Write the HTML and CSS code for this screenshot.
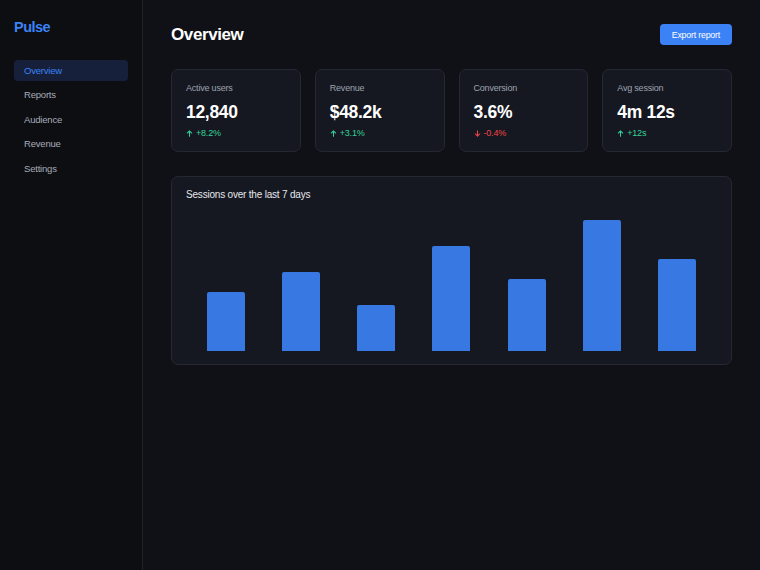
FILE: index.html
```html
<!DOCTYPE html>
<html>
<head>
    <title>Pulse - Overview</title>
    <meta name="viewport" content="width=device-width, initial-scale=1.0">
    <link rel="stylesheet" href="styles.css">
</head>
<body>
    <aside class="sidebar">
        <div class="logo">Pulse</div>
        <nav class="nav">
            <a class="nav-item active" href="#">Overview</a>
            <a class="nav-item" href="#">Reports</a>
            <a class="nav-item" href="#">Audience</a>
            <a class="nav-item" href="#">Revenue</a>
            <a class="nav-item" href="#">Settings</a>
        </nav>
    </aside>

    <main class="main">
        <div class="header">
            <h1>Overview</h1>
            <button type="button" class="btn-primary">Export report</button>
        </div>

        <div class="stats">
            <div class="card stat">
                <div class="stat-label">Active users</div>
                <div class="stat-value">12,840</div>
                <div class="stat-change up">
                    <svg viewBox="0 0 8 8"><path d="M4 7V1M1.5 3.5L4 1l2.5 2.5"/></svg>
                    +8.2%
                </div>
            </div>
            <div class="card stat">
                <div class="stat-label">Revenue</div>
                <div class="stat-value">$48.2k</div>
                <div class="stat-change up">
                    <svg viewBox="0 0 8 8"><path d="M4 7V1M1.5 3.5L4 1l2.5 2.5"/></svg>
                    +3.1%
                </div>
            </div>
            <div class="card stat">
                <div class="stat-label">Conversion</div>
                <div class="stat-value">3.6%</div>
                <div class="stat-change down">
                    <svg viewBox="0 0 8 8"><path d="M4 1v6M1.5 4.5L4 7l2.5-2.5"/></svg>
                    -0.4%
                </div>
            </div>
            <div class="card stat">
                <div class="stat-label">Avg session</div>
                <div class="stat-value">4m 12s</div>
                <div class="stat-change up">
                    <svg viewBox="0 0 8 8"><path d="M4 7V1M1.5 3.5L4 1l2.5 2.5"/></svg>
                    +12s
                </div>
            </div>
        </div>

        <div class="card chart-card">
            <div class="chart-title">Sessions over the last 7 days</div>
            <div class="chart">
                <div class="bar-col"><div class="bar" style="height: 59px"></div></div>
                <div class="bar-col"><div class="bar" style="height: 79px"></div></div>
                <div class="bar-col"><div class="bar" style="height: 46px"></div></div>
                <div class="bar-col"><div class="bar" style="height: 105px"></div></div>
                <div class="bar-col"><div class="bar" style="height: 72px"></div></div>
                <div class="bar-col"><div class="bar" style="height: 131px"></div></div>
                <div class="bar-col"><div class="bar" style="height: 92px"></div></div>
            </div>
        </div>
    </main>
</body>
</html>
```

FILE: styles.css
```css
* {
    box-sizing: border-box;
}

html, body {
    height: 100%;
}

body {
    margin: 0;
    display: flex;
    background-color: #101116;
    color: #f3f4f6;
    font-family: "Liberation Sans", Arial, sans-serif;
}

/* sidebar */

.sidebar {
    width: 143px;
    flex-shrink: 0;
    padding: 17px 14px;
    background-color: #0d0e12;
    border-right: 1px solid #1f212b;
}

.logo {
    font-size: 14.5px;
    line-height: 20px;
    font-weight: bold;
    letter-spacing: -0.5px;
    color: #3b82f6;
}

.nav {
    display: flex;
    flex-direction: column;
    gap: 3.4px;
    margin-top: 23px;
}

.nav-item {
    display: block;
    height: 21px;
    line-height: 21px;
    padding: 0 10px;
    border-radius: 4px;
    font-size: 9.5px;
    letter-spacing: -0.2px;
    color: #a6acb8;
    text-decoration: none;
}

.nav-item.active {
    background-color: #16203a;
    color: #3b82f6;
}

/* main area */

.main {
    flex: 1;
    padding: 24px 28px;
}

.header {
    display: flex;
    align-items: center;
    justify-content: space-between;
    height: 21px;
}

.header h1 {
    margin: 0;
    font-size: 17px;
    letter-spacing: -0.4px;
    font-weight: bold;
    color: #ffffff;
}

.btn-primary {
    height: 21px;
    padding: 0 12px;
    border: none;
    border-radius: 4px;
    background-color: #3b82f6;
    color: #ffffff;
    font-family: inherit;
    font-size: 8.8px;
    letter-spacing: -0.2px;
    cursor: pointer;
}

.card {
    background-color: #161821;
    border: 1px solid #252833;
    border-radius: 7px;
}

.stats {
    display: grid;
    grid-template-columns: repeat(4, 1fr);
    gap: 14px;
    margin-top: 24px;
}

.stat {
    height: 83px;
    padding: 11px 14px;
}

.stat-label {
    font-size: 9px;
    line-height: 15px;
    letter-spacing: -0.2px;
    color: #9ca3af;
}

.stat-value {
    margin-top: 5px;
    font-size: 17.5px;
    line-height: 22px;
    letter-spacing: -0.3px;
    font-weight: bold;
    color: #ffffff;
}

.stat-change {
    display: flex;
    align-items: center;
    gap: 3px;
    margin-top: 3px;
    font-size: 9px;
    line-height: 14px;
    letter-spacing: -0.2px;
}

.stat-change svg {
    width: 7px;
    height: 7px;
    fill: none;
    stroke: currentColor;
    stroke-width: 1.2;
    stroke-linecap: round;
    stroke-linejoin: round;
}

.up {
    color: #34d399;
}

.down {
    color: #ef4444;
}

/* chart */

.chart-card {
    margin-top: 24px;
    padding: 10px 14px 13px;
}

.chart-title {
    font-size: 10px;
    line-height: 16px;
    letter-spacing: -0.2px;
    color: #e5e7eb;
}

.chart {
    display: grid;
    grid-template-columns: repeat(7, 1fr);
    align-items: end;
    height: 148px;
    margin: 0 2px;
}

.bar-col {
    display: flex;
    justify-content: center;
}

.bar {
    width: 38px;
    border-radius: 2px 2px 0 0;
    background-color: #3778e2;
}
```
